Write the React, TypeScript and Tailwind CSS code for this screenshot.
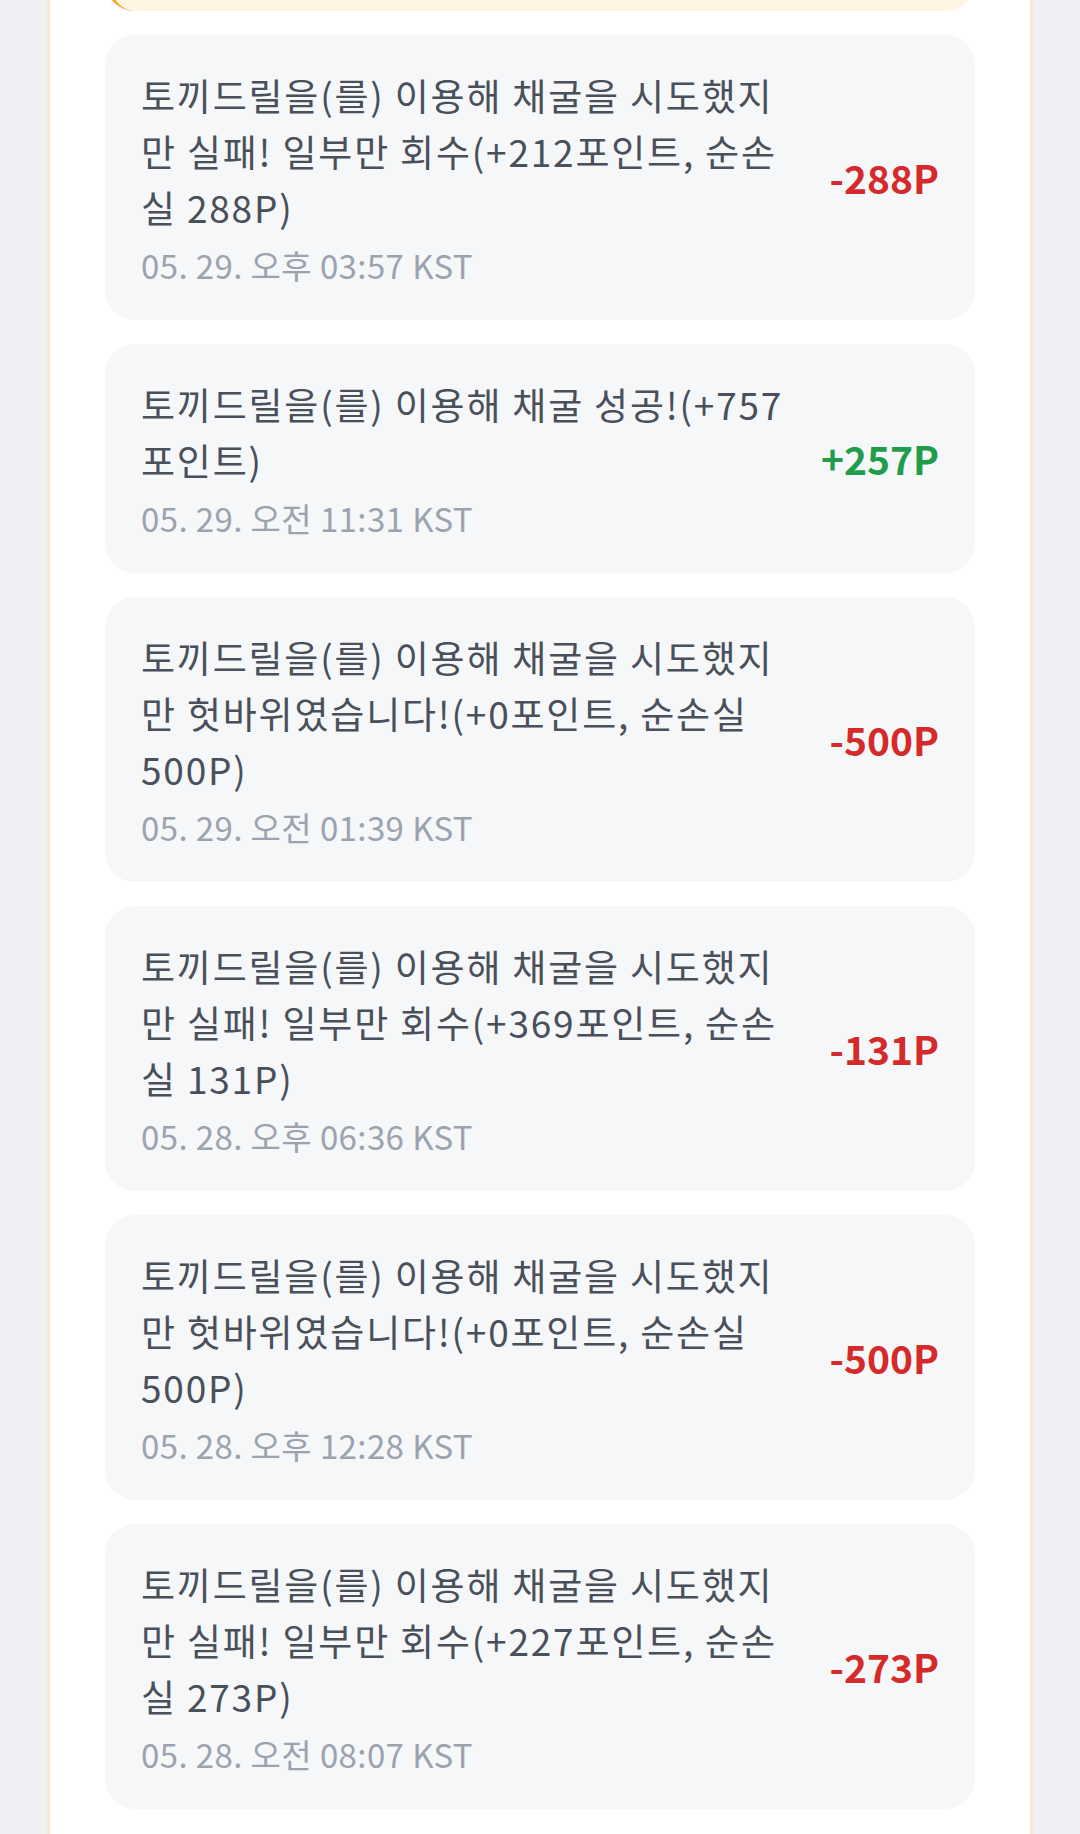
import React from "react";

type MiningLog = {
  id: number;
  message: string;
  time: string;
  delta: number;
};

const logs: MiningLog[] = [
  { id: 1, message: "토끼드릴을(를) 이용해 채굴을 시도했지만 실패! 일부만 회수(+212포인트, 순손실 288P)", time: "05. 29. 오후 03:57 KST", delta: -288 },
  { id: 2, message: "토끼드릴을(를) 이용해 채굴 성공!(+757포인트)", time: "05. 29. 오전 11:31 KST", delta: 257 },
  { id: 3, message: "토끼드릴을(를) 이용해 채굴을 시도했지만 헛바위였습니다!(+0포인트, 순손실 500P)", time: "05. 29. 오전 01:39 KST", delta: -500 },
  { id: 4, message: "토끼드릴을(를) 이용해 채굴을 시도했지만 실패! 일부만 회수(+369포인트, 순손실 131P)", time: "05. 28. 오후 06:36 KST", delta: -131 },
  { id: 5, message: "토끼드릴을(를) 이용해 채굴을 시도했지만 헛바위였습니다!(+0포인트, 순손실 500P)", time: "05. 28. 오후 12:28 KST", delta: -500 },
  { id: 6, message: "토끼드릴을(를) 이용해 채굴을 시도했지만 실패! 일부만 회수(+227포인트, 순손실 273P)", time: "05. 28. 오전 08:07 KST", delta: -273 },
];

function LogRow({ log }: { log: MiningLog }) {
  const positive = log.delta >= 0;
  return (
    <div className="flex items-center gap-8 rounded-[30px] bg-[#f6f7f9] px-9 py-8">
      <div className="min-w-0 flex-1">
        <p className="text-[37px] leading-[56px] tracking-[1.8px] text-[#4a505a]">{log.message}</p>
        <p className="mt-2 text-[33px] leading-[45px] tracking-[0.4px] text-[#9ca3af]">{log.time}</p>
      </div>
      <span className={`shrink-0 text-[39px] font-bold ${positive ? "text-[#1f9d4b]" : "text-[#d42a2a]"}`}>
        {positive ? "+" : "-"}
        {Math.abs(log.delta)}P
      </span>
    </div>
  );
}

export default function App() {
  return (
    <div
      className="min-h-[1834px] bg-[#eef0f3] px-[47px]"
      style={{ fontFamily: '"Noto Sans CJK KR", "Noto Sans", sans-serif' }}
    >
      <div className="flex min-h-[1834px] flex-col gap-6 border-x-[3px] border-[#f8e9cc] bg-white px-[55px] pb-[25px]">
        {/* summary banner, scrolled mostly out of view */}
        <div className="-mt-[69px] h-[80px] rounded-[30px] border-l-[5px] border-[#f5a524] bg-[#fff5e5]" />
        {logs.map((log) => (
          <LogRow key={log.id} log={log} />
        ))}
      </div>
    </div>
  );
}
